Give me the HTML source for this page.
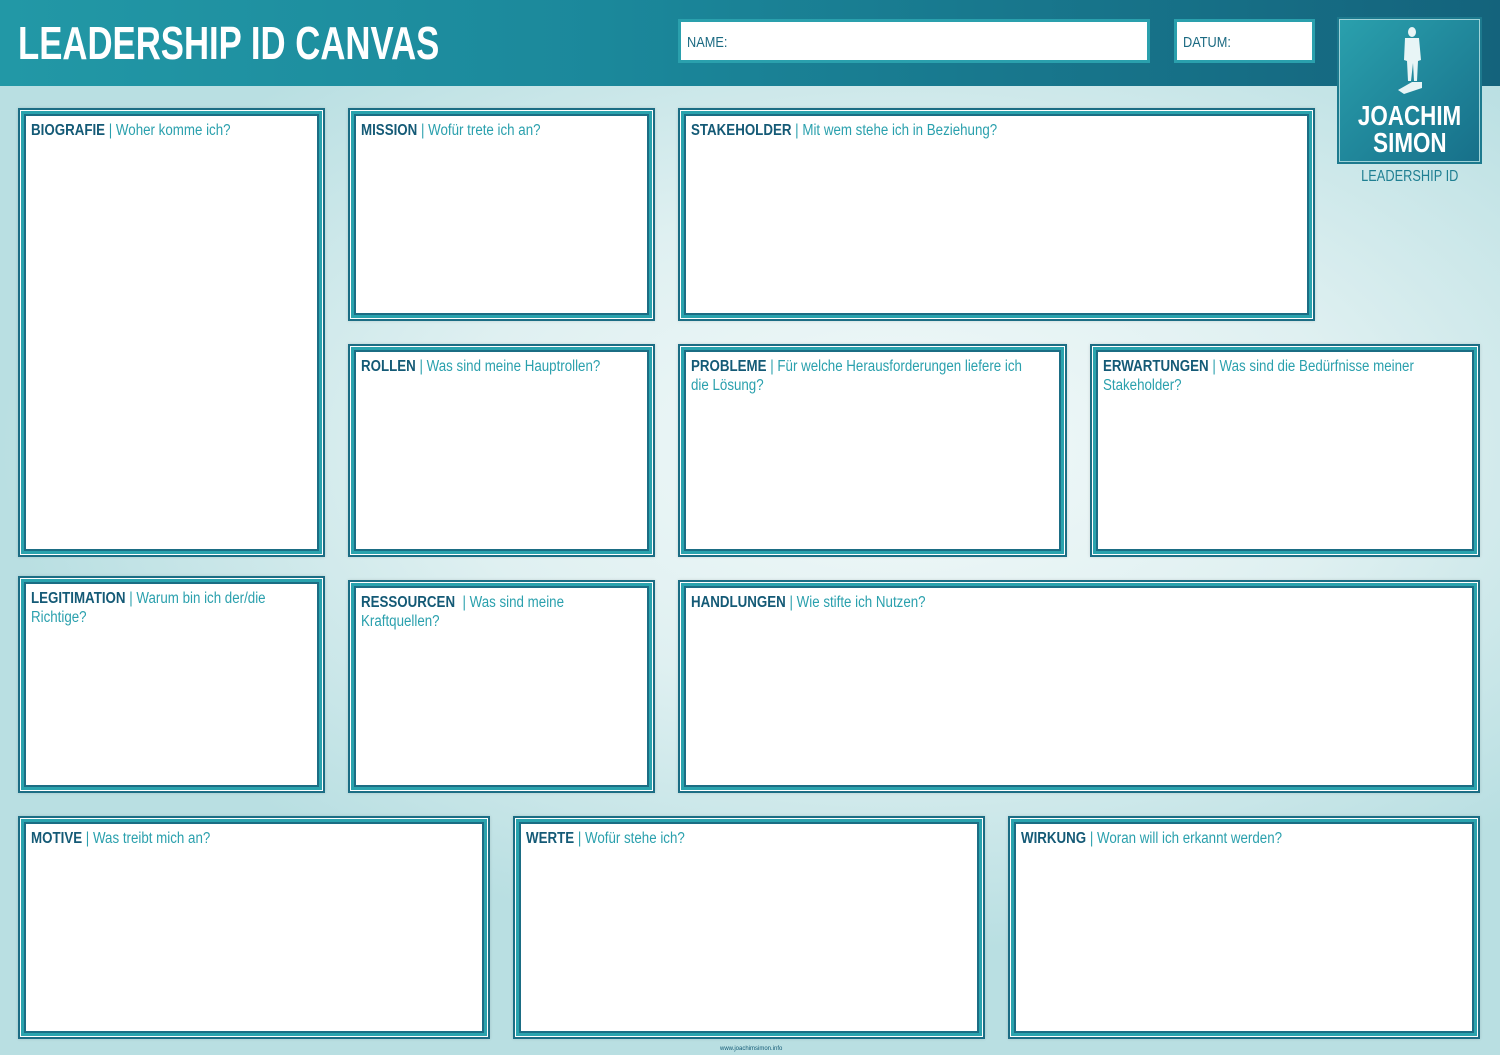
<!DOCTYPE html>
<html><head><meta charset="utf-8"><style>
body{margin:0;width:1500px;height:1055px;overflow:hidden;position:relative;font-family:"Liberation Sans",sans-serif;
background:radial-gradient(ellipse 900px 500px at 900px 450px,#f2f9f9 0%,#dff0f1 50%,#b9dfe2 100%);}
.hdr{position:absolute;left:0;top:0;width:1500px;height:86px;background:linear-gradient(90deg,#2298a6 0%,#1b889b 40%,#14637c 100%);}
.title{position:absolute;left:18px;top:18px;color:#fff;font-weight:bold;font-size:46px;line-height:50px;transform:scaleX(0.755);transform-origin:0 0;white-space:nowrap}
.fld{position:absolute;background:#fff;border:3px solid #2aa0ad;box-sizing:border-box;color:#1b6a82;font-size:15px;padding:12px 6px;}
.fld span{display:inline-block;transform:scaleX(0.85);transform-origin:0 0}
.box{position:absolute;box-sizing:border-box;border:2px solid #1b6d84;background:#fff;box-shadow:0 0 3px rgba(0,0,0,.12);}
.box::before{content:"";position:absolute;left:1px;top:1px;right:1px;bottom:1px;border:3px solid #2aa3ae;}
.box::after{content:"";position:absolute;left:4px;top:4px;right:4px;bottom:4px;border:2px solid #1b6d84;}
.t{position:absolute;left:11px;top:11px;font-size:15.5px;line-height:19px;color:#2aa0ad;z-index:2;transform:scaleX(0.86);transform-origin:0 0}
.t b{color:#145a76}
.logo{position:absolute;left:1339px;top:19px;width:141px;height:143px;box-sizing:border-box;background:linear-gradient(135deg,#2aa0ad,#17708a);border:1px solid #9fd3d8;box-shadow:0 0 0 2px #1d7a8e;color:#fff;text-align:center;font-weight:bold;font-size:28px;line-height:27px;}
.sx{display:inline-block;transform:scaleX(0.8);}
</style></head><body>
<div class="hdr"></div>
<div class="title">LEADERSHIP ID CANVAS</div>
<div class="fld" style="left:678px;top:19px;width:472px;height:44px"><span>NAME:</span></div>
<div class="fld" style="left:1174px;top:19px;width:141px;height:44px"><span>DATUM:</span></div>
<div class="logo">
<svg width="40" height="72" viewBox="0 0 40 72" style="display:block;margin:6px auto 4px"><g fill="#e8f5f6"><ellipse cx="22" cy="6" rx="4" ry="5"/><path d="M15 12h14l2 22-3 1-1 20h-3l-1-18-2 18h-3l-1-20-3-1z"/><path d="M8 64l14-8h10v6l-18 6z"/></g></svg>
<div><span class="sx">JOACHIM</span><br><span class="sx">SIMON</span></div>
<div style="position:absolute;left:-10px;right:-10px;top:143px;color:#1f7f92;font-size:16px;font-weight:normal"><span class="sx">LEADERSHIP ID</span></div>
</div>

<div class="box" style="left:18px;top:108px;width:307px;height:449px"><div class="t" style="width:330px"><b>BIOGRAFIE</b> | Woher komme ich?</div></div>
<div class="box" style="left:348px;top:108px;width:307px;height:213px"><div class="t" style="width:330px"><b>MISSION</b> | Wofür trete ich an?</div></div>
<div class="box" style="left:678px;top:108px;width:637px;height:213px"><div class="t" style="width:700px"><b>STAKEHOLDER</b> | Mit wem stehe ich in Beziehung?</div></div>
<div class="box" style="left:348px;top:344px;width:307px;height:213px"><div class="t" style="width:330px"><b>ROLLEN</b> | Was sind meine Hauptrollen?</div></div>
<div class="box" style="left:678px;top:344px;width:389px;height:213px"><div class="t" style="width:405px"><b>PROBLEME</b> | Für welche Herausforderungen liefere ich die Lösung?</div></div>
<div class="box" style="left:1090px;top:344px;width:390px;height:213px"><div class="t" style="width:400px"><b>ERWARTUNGEN</b> | Was sind die Bedürfnisse meiner Stakeholder?</div></div>
<div class="box" style="left:18px;top:576px;width:307px;height:217px"><div class="t" style="width:300px"><b>LEGITIMATION</b> | Warum bin ich der/die Richtige?</div></div>
<div class="box" style="left:348px;top:580px;width:307px;height:213px"><div class="t" style="width:270px"><b>RESSOURCEN</b> &nbsp;| Was sind meine Kraftquellen?</div></div>
<div class="box" style="left:678px;top:580px;width:802px;height:213px"><div class="t" style="width:880px"><b>HANDLUNGEN</b> | Wie stifte ich Nutzen?</div></div>
<div class="box" style="left:18px;top:816px;width:472px;height:223px"><div class="t" style="width:500px"><b>MOTIVE</b> | Was treibt mich an?</div></div>
<div class="box" style="left:513px;top:816px;width:472px;height:223px"><div class="t" style="width:500px"><b>WERTE</b> | Wofür stehe ich?</div></div>
<div class="box" style="left:1008px;top:816px;width:472px;height:223px"><div class="t" style="width:500px"><b>WIRKUNG</b> | Woran will ich erkannt werden?</div></div>
<div style="position:absolute;left:720px;top:1046px;font-size:6px;color:#145a76">www.joachimsimon.info</div>
</body></html>
